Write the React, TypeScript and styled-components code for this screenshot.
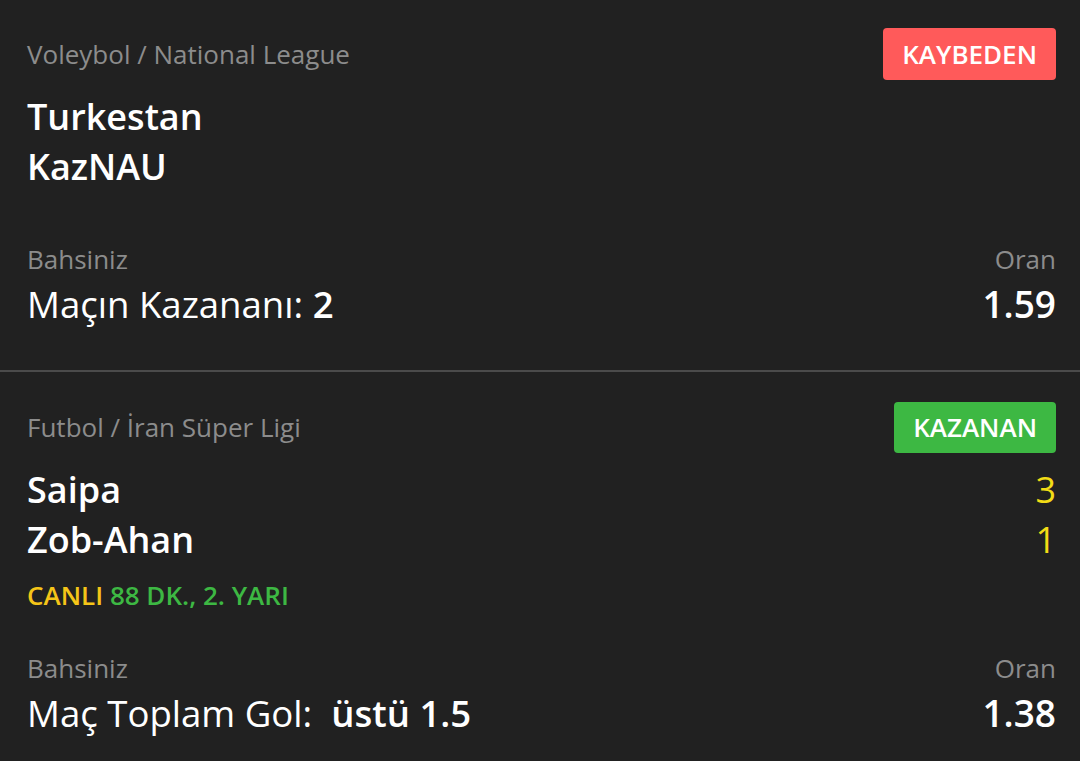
import React from 'react';
import styled, { createGlobalStyle } from 'styled-components';

type Status = 'lost' | 'won';

interface IBet {
  league: string;
  status: Status;
  home: string;
  away: string;
  score?: [number, number];
  live?: { label: string; time: string };
  market: string;
  pick: string;
  odds: string;
}

const bets: IBet[] = [
  {
    league: 'Voleybol / National League',
    status: 'lost',
    home: 'Turkestan',
    away: 'KazNAU',
    market: 'Maçın Kazananı:',
    pick: '2',
    odds: '1.59',
  },
  {
    league: 'Futbol / İran Süper Ligi',
    status: 'won',
    home: 'Saipa',
    away: 'Zob-Ahan',
    score: [3, 1],
    live: { label: 'CANLI', time: '88 DK., 2. YARI' },
    market: 'Maç Toplam Gol: ',
    pick: 'üstü 1.5',
    odds: '1.38',
  },
];

const GlobalStyle = createGlobalStyle`
  html, body {
    margin: 0;
    padding: 0;
    background: #212121;
  }
  body {
    font-family: 'Open Sans', 'Noto Sans', sans-serif;
    color: #fff;
  }
`;

const BetCard = ({ bet }: { bet: IBet }) => (
  <Card>
    <Header>
      <League>{bet.league}</League>
      <Badge status={bet.status}>{bet.status === 'won' ? 'KAZANAN' : 'KAYBEDEN'}</Badge>
    </Header>
    <Teams>
      <TeamRow>
        <Team>{bet.home}</Team>
        {bet.score && <Score>{bet.score[0]}</Score>}
      </TeamRow>
      <TeamRow>
        <Team>{bet.away}</Team>
        {bet.score && <Score>{bet.score[1]}</Score>}
      </TeamRow>
    </Teams>
    {bet.live && (
      <Live>
        <LiveLabel>{bet.live.label}</LiveLabel> <LiveTime>{bet.live.time}</LiveTime>
      </Live>
    )}
    <BetRow compact={!!bet.live}>
      <Column>
        <Label>Bahsiniz</Label>
        <Value>
          {bet.market} <Pick>{bet.pick}</Pick>
        </Value>
      </Column>
      <Column align="right">
        <Label>Oran</Label>
        <Odds>{bet.odds}</Odds>
      </Column>
    </BetRow>
  </Card>
);

const App = () => (
  <>
    <GlobalStyle />
    <List>
      {bets.map((bet) => (
        <BetCard key={bet.home} bet={bet} />
      ))}
    </List>
  </>
);

const List = styled.div`
  display: flex;
  flex-direction: column;
  background: #212121;
  min-height: 761px;
`;

const Card = styled.div`
  display: flex;
  flex-direction: column;
  padding: 28px 24px 44px 27px;
  & + & {
    border-top: 2px solid #4b4b4b;
    padding-top: 29px;
    padding-bottom: 26px;
  }
`;

const Header = styled.div`
  display: flex;
  justify-content: space-between;
  align-items: center;
  height: 52px;
`;

const League = styled.div`
  font-size: 26px;
  color: #8c8c8c;
`;

const Badge = styled.div<{ status: Status }>`
  display: flex;
  align-items: center;
  justify-content: center;
  height: ${(p) => (p.status === 'won' ? 51 : 52)}px;
  padding: 0 19px;
  border-radius: 4px;
  font-size: 26px;
  font-weight: 600;
  color: #fff;
  background: ${(p) => (p.status === 'won' ? '#3db843' : '#ff5a5a')};
`;

const Teams = styled.div`
  display: flex;
  flex-direction: column;
  margin-top: 11px;
`;

const TeamRow = styled.div`
  display: flex;
  justify-content: space-between;
  align-items: center;
  height: 50px;
`;

const Team = styled.div`
  font-size: 36px;
  font-weight: 600;
  color: #fff;
`;

const Score = styled.div`
  font-size: 36px;
  color: #f2dc16;
`;

const Live = styled.div`
  margin-top: 16px;
  font-size: 26px;
  font-weight: 600;
  line-height: 30px;
`;

const LiveLabel = styled.span`
  color: #f5c518;
`;

const LiveTime = styled.span`
  color: #3db843;
`;

const BetRow = styled.div<{ compact?: boolean }>`
  display: flex;
  justify-content: space-between;
  margin-top: ${(p) => (p.compact ? 43 : 53)}px;
`;

const Column = styled.div<{ align?: 'right' }>`
  display: flex;
  flex-direction: column;
  gap: 8px;
  align-items: ${(p) => (p.align === 'right' ? 'flex-end' : 'flex-start')};
`;

const Label = styled.div`
  font-size: 26px;
  line-height: 30px;
  color: #8c8c8c;
`;

const Value = styled.div`
  font-size: 36.6px;
  line-height: 44px;
  color: #fff;
  white-space: pre;
`;

const Pick = styled.span`
  font-weight: 600;
`;

const Odds = styled.div`
  font-size: 37px;
  line-height: 44px;
  font-weight: 600;
  color: #fff;
`;

export default App;
